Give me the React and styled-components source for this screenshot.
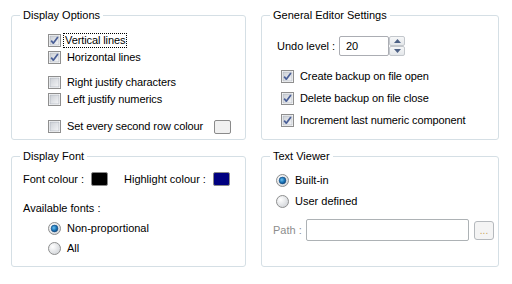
import styled, { createGlobalStyle } from 'styled-components';

const GlobalStyle = createGlobalStyle`
  html, body {
    margin: 0;
    padding: 0;
    background: #ffffff;
  }
  body {
    font-family: "Liberation Sans", Arial, sans-serif;
    font-size: 11px;
    color: #000;
  }
`;

const Page = styled.div`
  width: 512px;
  height: 284px;
  box-sizing: border-box;
  padding: 8px 0 0 11px;
  display: grid;
  grid-template-columns: 235px 238px;
  grid-template-rows: 132px 118px;
  column-gap: 15px;
  row-gap: 9px;
`;

const Group = styled.fieldset`
  margin: 0;
  padding: 0;
  min-width: 0;
  border: 1px solid #d5dfe5;
  border-radius: 3px;
  box-sizing: border-box;
`;

const Legend = styled.legend`
  margin-left: 8px;
  padding: 0 3px;
  line-height: 14px;
  height: 14px;
`;

const Body = styled.div`
  display: flex;
  flex-direction: column;
  padding: ${p => p.$pad || '0'};
`;

const Row = styled.div`
  display: flex;
  align-items: center;
  height: ${p => p.$h || 17}px;
  margin-top: ${p => p.$mt || 0}px;
  color: ${p => (p.$muted ? '#8d8d8d' : '#000')};
`;

const Label = styled.span`
  margin-left: ${p => p.$ml ?? 5}px;
  padding: 0 1px;
  line-height: 13px;
  white-space: nowrap;
  letter-spacing: ${p => p.$ls || 'normal'};
  outline: ${p => (p.$focus ? '1px dotted #000' : 'none')};
  outline-offset: 0px;
`;

const Swatch = styled.span`
  display: inline-block;
  width: 17px;
  height: 14px;
  box-sizing: border-box;
  border: 1px solid #8a8a8a;
  border-radius: 2px;
  background: ${p => p.$color};
  margin-left: ${p => p.$ml || '0'};
  flex: none;
`;

const FieldLabel = styled.span`
  width: ${p => p.$w}px;
  margin-left: ${p => p.$ml || 0}px;
  flex: none;
  white-space: nowrap;
`;

const Caption = styled.div`
  line-height: 14px;
  margin-top: ${p => p.$mt || 0}px;
`;

const TextBox = styled.div`
  box-sizing: border-box;
  width: ${p => p.$w}px;
  height: ${p => p.$h}px;
  border: 1px solid ${p => (p.$disabled ? '#adb2b5' : '#abadb3')};
  border-radius: 2px;
  background: #fff;
  padding-left: 6px;
  display: flex;
  align-items: center;
  flex: none;
`;

const Spinner = styled.div`
  display: flex;
  flex-direction: column;
  width: 16px;
  height: 20px;
  flex: none;
`;

const SpinButton = styled.div`
  flex: 1;
  box-sizing: border-box;
  border: 1px solid #c3c7cc;
  border-radius: 2px;
  background: linear-gradient(#f6f7f8, #e4e7ea);
  display: flex;
  align-items: center;
  justify-content: center;
`;

const DotsButton = styled.div`
  box-sizing: border-box;
  width: 20px;
  height: 19px;
  border: 1px solid #b5b9bd;
  border-radius: 3px;
  background: #f4f4f4;
  margin-left: 5px;
  display: flex;
  align-items: flex-end;
  justify-content: center;
  padding-bottom: 4px;
  color: #c9a35a;
  font-size: 10px;
  line-height: 8px;
  flex: none;
`;

const Checkbox = ({ checked }) => (
  <svg width="13" height="13" viewBox="0 0 13 13" style={{ flex: 'none' }}>
    <defs>
      <linearGradient id="cbfill" x1="0" y1="0" x2="1" y2="1">
        <stop offset="0" stopColor="#cbcfd5" />
        <stop offset="1" stopColor="#f4f5f7" />
      </linearGradient>
    </defs>
    <rect x="0.5" y="0.5" width="12" height="12" fill="#fff" stroke="#8f8f8f" />
    <rect x="2" y="2" width="9" height="9" fill="url(#cbfill)" stroke="#a9afb8" strokeWidth="0.6" />
    {checked && (
      <path d="M3.2 6.6 L5.3 9.2 L9.9 2.9" fill="none" stroke="#4a5f97" strokeWidth="1.7" strokeLinejoin="round" />
    )}
  </svg>
);

const Radio = ({ checked }) => (
  <svg width="13" height="13" viewBox="0 0 13 13" style={{ flex: 'none' }}>
    <defs>
      <radialGradient id="rbfill" cx="0.35" cy="0.35" r="0.7">
        <stop offset="0" stopColor="#ffffff" />
        <stop offset="1" stopColor="#d3d6da" />
      </radialGradient>
      <radialGradient id="rbdot" cx="0.4" cy="0.4" r="0.6">
        <stop offset="0" stopColor="#6fc0ee" />
        <stop offset="0.6" stopColor="#1c78bb" />
        <stop offset="1" stopColor="#0d4f8a" />
      </radialGradient>
    </defs>
    <circle cx="6.5" cy="6.5" r="6" fill="url(#rbfill)" stroke="#8e8f8f" />
    {checked && <circle cx="6.5" cy="6.5" r="3.4" fill="url(#rbdot)" stroke="#17497e" strokeWidth="0.6" />}
  </svg>
);

const Arrow = ({ up }) => (
  <svg width="7" height="4" viewBox="0 0 7 4">
    <path d={up ? 'M0 4 L3.5 0 L7 4 Z' : 'M0 0 L3.5 4 L7 0 Z'} fill="#4d6185" />
  </svg>
);

const CheckItem = ({ checked, children, mt, focus }) => (
  <Row $mt={mt}>
    <Checkbox checked={checked} />
    <Label $focus={focus} $ml={focus ? 3 : 5} $ls="-0.1px">{children}</Label>
  </Row>
);

const RadioItem = ({ checked, children, mt, h }) => (
  <Row $mt={mt} $h={h || 20}>
    <Radio checked={checked} />
    <Label>{children}</Label>
  </Row>
);

export default function App() {
  return (
    <>
      <GlobalStyle />
      <Page>
        <Group>
          <Legend>Display Options</Legend>
          <Body $pad="10px 14px 0 36px">
            <CheckItem checked focus>Vertical lines</CheckItem>
            <CheckItem checked>Horizontal lines</CheckItem>
            <CheckItem mt={8}>Right justify characters</CheckItem>
            <CheckItem>Left justify numerics</CheckItem>
            <Row $mt={10}>
              <Checkbox />
              <Label $ls="-0.1px">Set every second row colour</Label>
              <Swatch $color="#f0f0f0" $ml="auto" />
            </Row>
          </Body>
        </Group>

        <Group>
          <Legend>General Editor Settings</Legend>
          <Body $pad="0 0 0 15px">
            <Row $h={20} $mt={14}>
              <FieldLabel $w={62}>Undo level :</FieldLabel>
              <TextBox $w={50} $h={20}>20</TextBox>
              <Spinner>
                <SpinButton><Arrow up /></SpinButton>
                <SpinButton><Arrow /></SpinButton>
              </Spinner>
            </Row>
            <Body $pad="0 0 0 4px">
              <CheckItem checked mt={12}>Create backup on file open</CheckItem>
              <CheckItem checked mt={5}>Delete backup on file close</CheckItem>
              <CheckItem checked mt={5}>Increment last numeric component</CheckItem>
            </Body>
          </Body>
        </Group>

        <Group>
          <Legend>Display Font</Legend>
          <Body $pad="0 0 0 11px">
            <Row $h={14} $mt={9}>
              <FieldLabel $w={68}>Font colour :</FieldLabel>
              <Swatch $color="#000000" />
              <FieldLabel $w={89} $ml={16}>Highlight colour :</FieldLabel>
              <Swatch $color="#000080" />
            </Row>
            <Caption $mt={15}>Available fonts :</Caption>
            <Body $pad="3px 0 0 25px">
              <RadioItem checked>Non-proportional</RadioItem>
              <RadioItem>All</RadioItem>
            </Body>
          </Body>
        </Group>

        <Group>
          <Legend>Text Viewer</Legend>
          <Body $pad="0 0 0 14px">
            <RadioItem checked mt={7}>Built-in</RadioItem>
            <RadioItem mt={1}>User defined</RadioItem>
            <Row $h={22} $mt={8} $muted>
              <FieldLabel $w={33} $ml={-3}>Path :</FieldLabel>
              <TextBox $w={163} $h={22} $disabled />
              <DotsButton>...</DotsButton>
            </Row>
          </Body>
        </Group>
      </Page>
    </>
  );
}
